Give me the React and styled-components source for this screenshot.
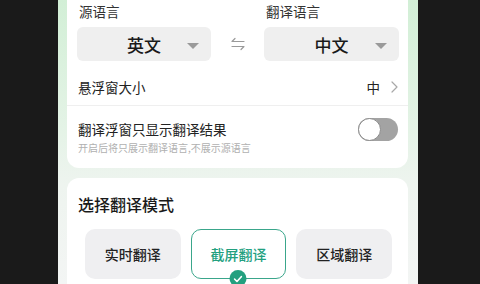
import React from "react";
import styled, { createGlobalStyle } from "styled-components";

const Global = createGlobalStyle`
  html, body { margin: 0; padding: 0; background: #1a1a1a; }
  body { font-family: "Noto Sans CJK SC", "Noto Sans", sans-serif; overflow: hidden; }
`;

const Stage = styled.div`
  width: 480px;
  height: 284px;
  display: flex;
  padding-left: 58px;
  box-sizing: border-box;
  overflow: hidden;
`;

const Screen = styled.div`
  width: 360px;
  height: 284px;
  padding: 0 10px 0 9px;
  box-sizing: border-box;
  background: linear-gradient(180deg, #d2efd6 0%, #e4f3e6 45%, #eef4ef 65%, #f3f5f4 100%);
  display: flex;
  flex-direction: column;
  gap: 10px;
  overflow: hidden;
`;

const Card = styled.div`
  background: #fff;
  border-radius: 12px;
  flex-shrink: 0;
`;

const TopCard = styled(Card)`
  margin-top: -12px;
  padding-top: 13px;
`;

const LangSection = styled.div`
  display: grid;
  grid-template-columns: 134px 1fr 135px;
  padding: 0 9px 0 10px;
  margin-bottom: 8px;
`;

const LangCol = styled.div`
  display: flex;
  flex-direction: column;
  gap: 6px;
`;

const Label = styled.div`
  font-size: 13.5px;
  line-height: 20px;
  color: #333;
  padding-left: ${(p) => p.$indent || 0}px;
`;

const Select = styled.div`
  position: relative;
  height: 34px;
  border-radius: 6px;
  background: #efefef;
  display: flex;
  align-items: center;
  justify-content: center;
  font-size: 17px;
  font-weight: 500;
  color: #1a1a1a;
`;

const Caret = styled.span`
  position: absolute;
  right: 12px;
  top: 16px;
  width: 0;
  height: 0;
  border-left: 6px solid transparent;
  border-right: 6px solid transparent;
  border-top: 6px solid #9a9a9a;
`;

const SwapCell = styled.div`
  display: flex;
  align-items: flex-end;
  justify-content: center;
  padding-bottom: 10px;
`;

const Row = styled.div`
  display: flex;
  align-items: center;
  justify-content: space-between;
  height: 36px;
  padding: 0 10px 0 11px;
`;

const RowText = styled.div`
  font-size: 13.5px;
  color: #222;
`;

const RowValue = styled.div`
  display: flex;
  align-items: center;
  gap: 11px;
  font-size: 13.5px;
  color: #222;
`;

const Divider = styled.div`
  height: 1px;
  background: #efefef;
`;

const ToggleRow = styled.div`
  display: flex;
  align-items: flex-start;
  justify-content: space-between;
  padding: 14px 10px 13px 11px;
`;

const TextStack = styled.div`
  display: flex;
  flex-direction: column;
`;

const Title = styled.div`
  font-size: 13.5px;
  line-height: 19px;
  color: #222;
`;

const Sub = styled.div`
  margin-top: 2px;
  font-size: 10px;
  line-height: 14px;
  color: #b0b0b0;
`;

const Switch = styled.div`
  position: relative;
  width: 40px;
  height: 23px;
  border-radius: 12px;
  background: #a3a3a3;
  margin-top: -2px;
`;

const Knob = styled.span`
  position: absolute;
  left: 0;
  top: 0;
  width: 23px;
  height: 23px;
  box-sizing: border-box;
  border-radius: 50%;
  background: #fff;
  border: 1px solid #8a8a8a;
`;

const ModeCard = styled(Card)`
  padding: 15px 16px 0 11px;
  height: 120px;
`;

const ModeTitle = styled.div`
  font-size: 16px;
  line-height: 22px;
  font-weight: 500;
  color: #1a1a1a;
`;

const ModeGrid = styled.div`
  display: grid;
  grid-template-columns: repeat(3, 1fr);
  gap: 10px;
  margin: 14px 0 0 7px;
`;

const ModeBtn = styled.div`
  position: relative;
  height: 50px;
  box-sizing: border-box;
  border-radius: 10px;
  display: flex;
  align-items: center;
  justify-content: center;
  font-size: 14px;
  font-weight: 500;
  background: ${(p) => (p.$active ? "#fff" : "#efeff1")};
  color: ${(p) => (p.$active ? "#23a07f" : "#222")};
  border: 1.5px solid ${(p) => (p.$active ? "#3aa68b" : "transparent")};
`;

const Check = styled.span`
  position: absolute;
  left: 50%;
  bottom: -9px;
  transform: translateX(-50%);
  width: 17px;
  height: 17px;
  border-radius: 50%;
  background: #23a07f;
  display: flex;
  align-items: center;
  justify-content: center;
`;

const SwapIcon = () => (
  <svg width="16" height="14" viewBox="0 0 16 14" fill="none" stroke="#9a9a9a" strokeWidth="1.2" strokeLinecap="round" strokeLinejoin="round">
    <path d="M5 1.5 L2 4.5 H14" />
    <path d="M2 9.5 H14 L11 12.5" />
  </svg>
);

const Chevron = () => (
  <svg width="7" height="12" viewBox="0 0 7 12" fill="none" stroke="#a8a8a8" strokeWidth="1.2" strokeLinecap="round" strokeLinejoin="round">
    <path d="M1 1 L6 6 L1 11" />
  </svg>
);

export default function App() {
  return (
    <>
      <Global />
      <Stage>
        <Screen>
          <TopCard>
            <LangSection>
              <LangCol>
                <Label $indent={2}>源语言</Label>
                <Select>
                  英文
                  <Caret />
                </Select>
              </LangCol>
              <SwapCell>
                <SwapIcon />
              </SwapCell>
              <LangCol>
                <Label $indent={2}>翻译语言</Label>
                <Select>
                  中文
                  <Caret />
                </Select>
              </LangCol>
            </LangSection>
            <Row>
              <RowText>悬浮窗大小</RowText>
              <RowValue>
                中
                <Chevron />
              </RowValue>
            </Row>
            <Divider />
            <ToggleRow>
              <TextStack>
                <Title>翻译浮窗只显示翻译结果</Title>
                <Sub>开启后将只展示翻译语言,不展示源语言</Sub>
              </TextStack>
              <Switch>
                <Knob />
              </Switch>
            </ToggleRow>
          </TopCard>
          <ModeCard>
            <ModeTitle>选择翻译模式</ModeTitle>
            <ModeGrid>
              <ModeBtn>实时翻译</ModeBtn>
              <ModeBtn $active>
                截屏翻译
                <Check>
                  <svg width="9" height="8" viewBox="0 0 9 8" fill="none" stroke="#fff" strokeWidth="1.6" strokeLinecap="round" strokeLinejoin="round">
                    <path d="M1 4 L3.5 6.5 L8 1.5" />
                  </svg>
                </Check>
              </ModeBtn>
              <ModeBtn>区域翻译</ModeBtn>
            </ModeGrid>
          </ModeCard>
        </Screen>
      </Stage>
    </>
  );
}
